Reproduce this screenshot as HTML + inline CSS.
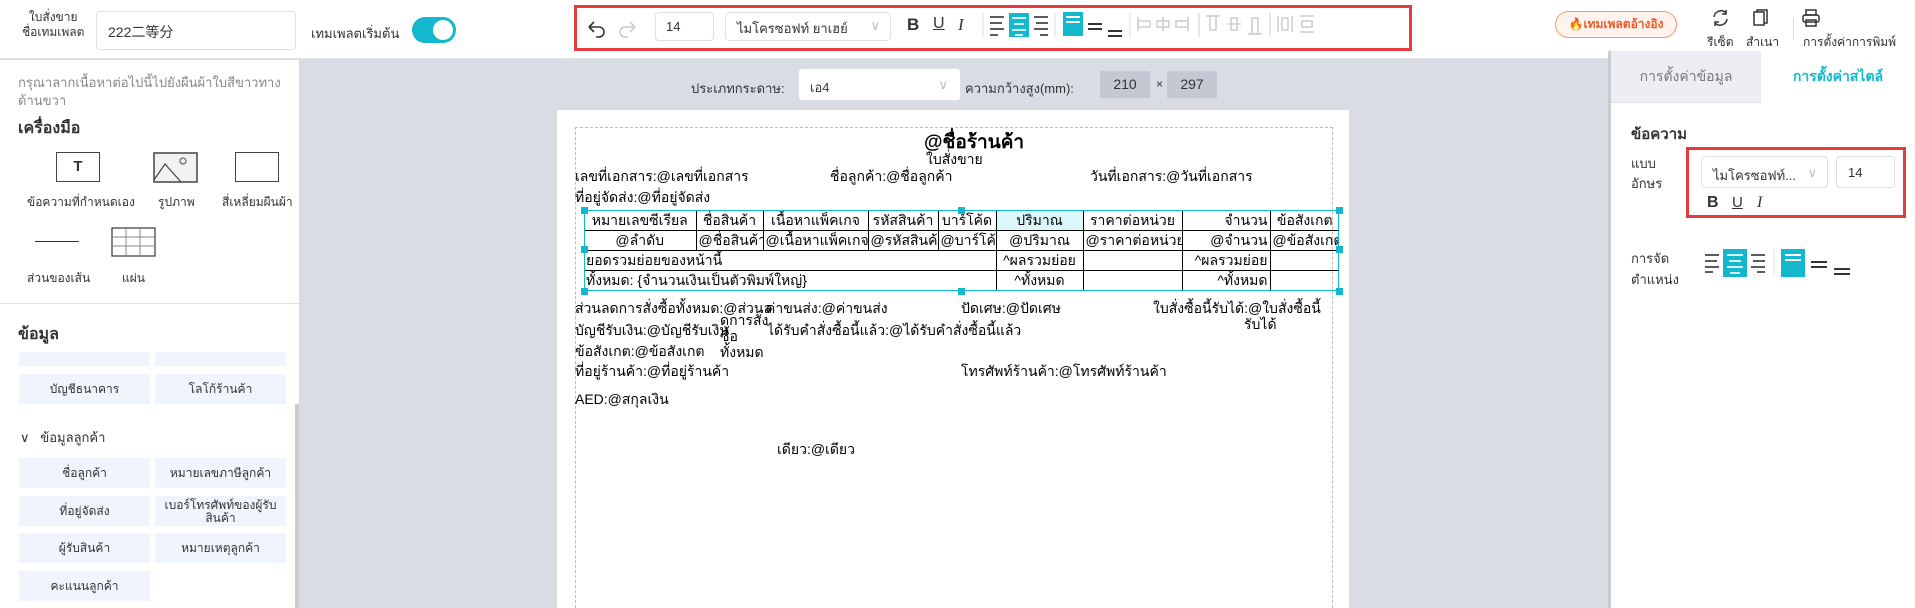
<!DOCTYPE html>
<html><head><meta charset="utf-8"><style>
*{box-sizing:border-box;margin:0;padding:0}
body{width:1915px;height:608px;overflow:hidden;background:#d9dce3;font-family:"Liberation Sans",sans-serif;color:#333;position:relative;font-size:13px}
.a{position:absolute;white-space:nowrap}
.top{position:absolute;left:0;top:0;width:1915px;height:59px;background:#fff;border-bottom:1px solid #e2e4ea}
.inp{position:absolute;border:1px solid #dcdfe6;border-radius:4px;background:#fff}
.teal{background:#14b8cd}
.left{position:absolute;left:0;top:60px;width:299px;height:548px;background:#fff}
.btn{position:absolute;width:131px;height:30px;background:#f0f4fc;text-align:center;line-height:30px;font-size:12px;color:#333}
.paper{position:absolute;left:557px;top:110px;width:792px;height:498px;background:#fff}
.pt{position:absolute;white-space:nowrap;font-size:14px;color:#000}
table{border-collapse:collapse;position:absolute;left:584px;top:210px;width:755px;font-size:14px;color:#000;table-layout:fixed}
td{border:1px solid #000;height:20px;line-height:18px;text-align:center;padding:0 2px;white-space:nowrap;overflow:hidden}
.h{position:absolute;width:7px;height:7px;background:#14b8cd}
.right{position:absolute;left:1610px;top:51px;width:305px;height:557px;background:#fff}
.ic{position:absolute}
</style></head><body>
<div class="top"></div>
<div class="a" style="left:22px;top:10px;font-size:12px;line-height:15px;text-align:center">ใบสั่งขาย<br>ชื่อเทมเพลต</div>
<div class="inp" style="left:96px;top:11px;width:200px;height:39px;padding:10px 11px;font-size:14px">222二等分</div>
<div class="a" style="left:311px;top:23px;font-size:13px">เทมเพลตเริ่มต้น</div>
<div class="a teal" style="left:412px;top:17px;width:44px;height:26px;border-radius:13px"><div style="position:absolute;right:3px;top:3px;width:20px;height:20px;border-radius:50%;background:#fff"></div></div>
<div class="a" style="left:574px;top:5px;width:838px;height:46px;border:3px solid #e8393d"></div>
<svg class="ic" style="left:585px;top:18px" width="60" height="22"><path d="M4 9h10a5 5 0 0 1 0 10h-3M4 9l5-5M4 9l5 5" stroke="#333" stroke-width="1.6" fill="none"/><path d="M50 9H40a5 5 0 0 0 0 10h3M50 9l-5-5M50 9l-5 5" stroke="#ccc" stroke-width="1.6" fill="none"/></svg>
<div class="inp" style="left:655px;top:12px;width:59px;height:29px;padding:6px 10px;font-size:13px">14</div>
<div class="inp" style="left:725px;top:12px;width:166px;height:29px;padding:5px 11px;font-size:13px">ไมโครซอฟท์ ยาเฮย์<span style="position:absolute;right:10px;color:#bbb">∨</span></div>
<div class="a" style="left:907px;top:15px;font-size:17px;font-weight:bold">B</div>
<div class="a" style="left:933px;top:15px;font-size:16px;text-decoration:underline">U</div>
<div class="a" style="left:958px;top:15px;font-size:17px;font-style:italic;font-family:'Liberation Serif'">I</div>
<svg class="ic" style="left:980px;top:10px" width="440" height="32">
<line x1="3" y1="3" x2="3" y2="27" stroke="#ddd"/>
<g stroke="#333" stroke-width="1.6"><line x1="10" y1="7" x2="24" y2="7"/><line x1="10" y1="13" x2="22" y2="13"/><line x1="10" y1="19" x2="24" y2="19"/><line x1="10" y1="25" x2="18" y2="25"/></g>
<rect x="29" y="3" width="20" height="24" fill="#14b8cd"/><g stroke="#fff" stroke-width="1.6"><line x1="32" y1="8" x2="46" y2="8"/><line x1="34" y1="14" x2="44" y2="14"/><line x1="32" y1="20" x2="46" y2="20"/><line x1="35" y1="25" x2="43" y2="25"/></g>
<g stroke="#333" stroke-width="1.6"><line x1="54" y1="7" x2="68" y2="7"/><line x1="56" y1="13" x2="68" y2="13"/><line x1="54" y1="19" x2="68" y2="19"/><line x1="60" y1="25" x2="68" y2="25"/></g>
<line x1="75" y1="3" x2="75" y2="27" stroke="#ddd"/>
<rect x="83" y="2" width="20" height="24" fill="#14b8cd"/><g stroke="#fff" stroke-width="2"><line x1="86" y1="7" x2="100" y2="7"/><line x1="86" y1="12" x2="100" y2="12"/></g>
<g stroke="#333" stroke-width="2"><line x1="108" y1="14" x2="122" y2="14"/><line x1="108" y1="19" x2="122" y2="19"/><line x1="128" y1="21" x2="142" y2="21"/><line x1="128" y1="26" x2="142" y2="26"/></g>
<line x1="150" y1="3" x2="150" y2="27" stroke="#ddd"/>
<g stroke="#ccc" stroke-width="1.5" fill="none"><line x1="158" y1="7" x2="158" y2="21"/><rect x="158" y="11" width="12" height="6"/><line x1="183" y1="7" x2="183" y2="21"/><rect x="177" y="11" width="12" height="6"/><line x1="208" y1="7" x2="208" y2="21"/><rect x="196" y="11" width="12" height="6"/>
<line x1="219" y1="3" x2="219" y2="27" stroke="#ddd"/>
<line x1="226" y1="6" x2="240" y2="6"/><rect x="230" y="6" width="6" height="14"/><line x1="247" y1="14" x2="261" y2="14"/><rect x="251" y="8" width="6" height="12"/><line x1="268" y1="24" x2="282" y2="24"/><rect x="272" y="8" width="6" height="16"/>
<line x1="290" y1="3" x2="290" y2="27" stroke="#ddd"/>
<line x1="298" y1="6" x2="298" y2="22"/><line x1="312" y1="6" x2="312" y2="22"/><rect x="302" y="8" width="6" height="12"/><line x1="320" y1="6" x2="334" y2="6"/><line x1="320" y1="22" x2="334" y2="22"/><rect x="322" y="11" width="10" height="6"/></g>
</svg>
<div class="a" style="left:1555px;top:11px;width:122px;height:27px;border:1px solid #f7936b;background:#fff3ee;border-radius:14px;color:#f05a28;font-size:12px;font-weight:bold;line-height:25px;text-align:center">🔥เทมเพลตอ้างอิง</div>
<svg class="ic" style="left:1710px;top:8px" width="120" height="20"><g stroke="#333" stroke-width="1.5" fill="none"><path d="M4 9a7 7 0 0 1 12-4M17 11a7 7 0 0 1-12 4"/><path d="M16 2v4h-4M5 18v-4h4"/><rect x="44" y="4" width="10" height="13"/><path d="M47 4V2h10v13h-3"/><rect x="96" y="2" width="10" height="5"/><rect x="93" y="7" width="16" height="7" rx="2"/><rect x="96" y="12" width="10" height="6"/></g></svg>
<div class="a" style="left:1707px;top:33px;font-size:12px">รีเซ็ต</div>
<div class="a" style="left:1746px;top:33px;font-size:12px">สำเนา</div>
<div class="a" style="left:1793px;top:18px;width:1px;height:22px;background:#ddd"></div>
<div class="a" style="left:1803px;top:33px;font-size:12px">การตั้งค่าการพิมพ์</div>

<div class="left">
<div class="a" style="left:18px;top:14px;font-size:13px;color:#888;line-height:18px;white-space:normal;width:270px">กรุณาลากเนื้อหาต่อไปนี้ไปยังผืนผ้าใบสีขาวทางด้านขวา</div>
<div class="a" style="left:18px;top:56px;font-size:16px;font-weight:bold">เครื่องมือ</div>
<div class="a" style="left:56px;top:92px;width:44px;height:30px;border:1.5px solid #444;text-align:center;font-weight:bold;font-size:15px;line-height:27px">T</div>
<svg class="ic" style="left:153px;top:92px" width="45" height="31"><rect x="1" y="1" width="43" height="29" fill="#f2f2f2" stroke="#444" stroke-width="1.5"/><path d="M1 28l11-16 16 18" stroke="#444" fill="none" stroke-width="1.2"/><circle cx="30" cy="9" r="3" fill="none" stroke="#444"/></svg>
<div class="a" style="left:235px;top:92px;width:44px;height:30px;border:1.5px solid #444"></div>
<div class="a" style="left:27px;top:133px;font-size:12px">ข้อความที่กำหนดเอง</div>
<div class="a" style="left:158px;top:133px;font-size:12px">รูปภาพ</div>
<div class="a" style="left:222px;top:133px;font-size:12px">สี่เหลี่ยมผืนผ้า</div>
<div class="a" style="left:35px;top:181px;width:44px;height:1px;background:#333"></div>
<svg class="ic" style="left:111px;top:167px" width="45" height="30"><g stroke="#888" fill="none"><rect x="1" y="1" width="43" height="28" stroke="#444" stroke-width="1.3"/><line x1="15" y1="1" x2="15" y2="29"/><line x1="29" y1="1" x2="29" y2="29"/><line x1="1" y1="10" x2="44" y2="10"/><line x1="1" y1="19" x2="44" y2="19"/></g></svg>
<div class="a" style="left:27px;top:209px;font-size:12px">ส่วนของเส้น</div>
<div class="a" style="left:122px;top:209px;font-size:12px">แผ่น</div>
<div class="a" style="left:0;top:243px;width:299px;height:1px;background:#ddd"></div>
<div class="a" style="left:18px;top:262px;font-size:16px;font-weight:bold">ข้อมูล</div>
</div>
<div class="btn" style="left:19px;top:352px;height:14px"></div><div class="btn" style="left:155px;top:352px;height:14px"></div>
<div class="btn" style="left:19px;top:374px">บัญชีธนาคาร</div><div class="btn" style="left:155px;top:374px">โลโก้ร้านค้า</div>
<div class="a" style="left:20px;top:427px;font-size:13px">∨&nbsp;&nbsp;&nbsp;ข้อมูลลูกค้า</div>
<div class="btn" style="left:19px;top:458px">ชื่อลูกค้า</div><div class="btn" style="left:155px;top:458px">หมายเลขภาษีลูกค้า</div>
<div class="btn" style="left:19px;top:496px">ที่อยู่จัดส่ง</div><div class="btn" style="left:155px;top:496px;line-height:13px;padding-top:3px">เบอร์โทรศัพท์ของผู้รับสินค้า</div>
<div class="btn" style="left:19px;top:533px">ผู้รับสินค้า</div><div class="btn" style="left:155px;top:533px">หมายเหตุลูกค้า</div>
<div class="btn" style="left:19px;top:571px">คะแนนลูกค้า</div>
<div class="a" style="left:295px;top:404px;width:4px;height:204px;background:#ccc"></div>

<div class="a" style="left:691px;top:78px;font-size:13px">ประเภทกระดาษ:</div>
<div class="inp" style="left:798px;top:68px;width:163px;height:33px;padding:8px 11px;font-size:13px">เอ4<span style="position:absolute;right:12px;color:#bbb">∨</span></div>
<div class="a" style="left:965px;top:78px;font-size:13px">ความกว้างสูง(mm):</div>
<div class="a" style="left:1100px;top:71px;width:50px;height:27px;background:#c3c8d2;text-align:center;line-height:27px;font-size:14px">210</div>
<div class="a" style="left:1156px;top:77px;font-size:12px">×</div>
<div class="a" style="left:1167px;top:71px;width:50px;height:27px;background:#c3c8d2;text-align:center;line-height:27px;font-size:14px">297</div>

<div class="paper"></div>
<div class="a" style="left:575px;top:127px;width:758px;height:481px;border:1px dashed #bbb;border-bottom:none"></div>
<div class="pt" style="left:924px;top:127px;font-size:19px;font-weight:bold">@ชื่อร้านค้า</div>
<div class="pt" style="left:926px;top:149px">ใบสั่งขาย</div>
<div class="pt" style="left:575px;top:166px">เลขที่เอกสาร:@เลขที่เอกสาร</div>
<div class="pt" style="left:830px;top:166px">ชื่อลูกค้า:@ชื่อลูกค้า</div>
<div class="pt" style="left:1090px;top:166px">วันที่เอกสาร:@วันที่เอกสาร</div>
<div class="pt" style="left:575px;top:187px">ที่อยู่จัดส่ง:@ที่อยู่จัดส่ง</div>
<table>
<colgroup><col style="width:112px"><col style="width:67px"><col style="width:105px"><col style="width:70px"><col style="width:58px"><col style="width:87px"><col style="width:99px"><col style="width:88px"><col style="width:69px"></colgroup>
<tr><td style="border-top:none;border-left:none">หมายเลขซีเรียล</td><td style="border-top:none">ชื่อสินค้า</td><td style="border-top:none">เนื้อหาแพ็คเกจ</td><td style="border-top:none">รหัสสินค้า</td><td style="border-top:none">บาร์โค้ด</td><td style="border-top:none;background:#dcf7fa">ปริมาณ</td><td style="border-top:none">ราคาต่อหน่วย</td><td style="border-top:none;text-align:right">จำนวน</td><td style="border-top:none;border-right:none">ข้อสังเกต</td></tr>
<tr><td style="border-left:none">@ลำดับ</td><td>@ชื่อสินค้า</td><td>@เนื้อหาแพ็คเกจ</td><td>@รหัสสินค้า</td><td>@บาร์โค้ด</td><td>@ปริมาณ</td><td>@ราคาต่อหน่วย</td><td style="text-align:right">@จำนวน</td><td style="border-right:none">@ข้อสังเกต</td></tr>
<tr><td colspan="5" style="text-align:left;border-left:none">ยอดรวมย่อยของหน้านี้</td><td>^ผลรวมย่อย</td><td></td><td style="text-align:right">^ผลรวมย่อย</td><td style="border-right:none"></td></tr>
<tr><td colspan="5" style="text-align:left;border-left:none;border-bottom:none">ทั้งหมด: {จำนวนเงินเป็นตัวพิมพ์ใหญ่}</td><td style="border-bottom:none">^ทั้งหมด</td><td style="border-bottom:none"></td><td style="text-align:right;border-bottom:none">^ทั้งหมด</td><td style="border:none;border-left:1px solid #000"></td></tr>
</table>
<div class="a" style="left:584px;top:210px;width:755px;height:81px;border:1.5px solid #14b8cd"></div>
<div class="h" style="left:581px;top:207px"></div><div class="h" style="left:958px;top:207px"></div><div class="h" style="left:1336px;top:207px"></div>
<div class="h" style="left:581px;top:246px"></div><div class="h" style="left:1336px;top:246px"></div>
<div class="h" style="left:581px;top:288px"></div><div class="h" style="left:958px;top:288px"></div><div class="h" style="left:1336px;top:288px"></div>
<div class="pt" style="left:575px;top:298px">ส่วนลดการสั่งซื้อทั้งหมด:@ส่วนล</div>
<div class="pt" style="left:766px;top:298px">ค่าขนส่ง:@ค่าขนส่ง</div>
<div class="pt" style="left:961px;top:298px">ปัดเศษ:@ปัดเศษ</div>
<div class="pt" style="left:1153px;top:298px">ใบสั่งซื้อนี้รับได้:@ใบสั่งซื้อนี้</div>
<div class="pt" style="left:1244px;top:314px">รับได้</div>
<div class="pt" style="left:720px;top:312px;line-height:16px">ดการสั่ง<br>ซื้อ<br>ทั้งหมด</div>
<div class="pt" style="left:575px;top:320px">บัญชีรับเงิน:@บัญชีรับเงิน</div>
<div class="pt" style="left:767px;top:320px">ได้รับคำสั่งซื้อนี้แล้ว:@ได้รับคำสั่งซื้อนี้แล้ว</div>
<div class="pt" style="left:575px;top:341px">ข้อสังเกต:@ข้อสังเกต</div>
<div class="pt" style="left:575px;top:361px">ที่อยู่ร้านค้า:@ที่อยู่ร้านค้า</div>
<div class="pt" style="left:961px;top:361px">โทรศัพท์ร้านค้า:@โทรศัพท์ร้านค้า</div>
<div class="pt" style="left:575px;top:389px">AED:@สกุลเงิน</div>
<div class="pt" style="left:777px;top:439px">เดียว:@เดียว</div>

<div class="right"></div>
<div class="a" style="left:1608px;top:51px;width:3px;height:557px;background:#c9ccd3"></div>
<div class="a" style="left:1611px;top:51px;width:150px;height:52px;background:#eceef3;border-bottom:1px solid #e0e0e0;text-align:center;line-height:50px;color:#777;font-size:14px">การตั้งค่าข้อมูล</div>
<div class="a" style="left:1761px;top:51px;width:154px;height:52px;text-align:center;line-height:50px;color:#14b8cd;font-size:14px;font-weight:bold">การตั้งค่าสไตล์</div>
<div class="a" style="left:1631px;top:122px;font-size:15px;font-weight:bold">ข้อความ</div>
<div class="a" style="left:1631px;top:154px;font-size:13px;line-height:20px">แบบ<br>อักษร</div>
<div class="a" style="left:1686px;top:147px;width:220px;height:71px;border:3px solid #e8393d"></div>
<div class="inp" style="left:1701px;top:156px;width:127px;height:32px;padding:8px 11px;font-size:13px">ไมโครซอฟท์...<span style="position:absolute;right:10px;color:#bbb">∨</span></div>
<div class="inp" style="left:1836px;top:156px;width:59px;height:32px;padding:8px 11px;font-size:13px">14</div>
<div class="a" style="left:1707px;top:194px;font-size:16px;font-weight:bold">B</div>
<div class="a" style="left:1732px;top:194px;font-size:15px;text-decoration:underline">U</div>
<div class="a" style="left:1757px;top:194px;font-size:16px;font-style:italic;font-family:'Liberation Serif'">I</div>
<div class="a" style="left:1631px;top:248px;font-size:13px;line-height:21px">การจัด<br>ตำแหน่ง</div>
<svg class="ic" style="left:1703px;top:249px" width="160" height="32">
<g stroke="#333" stroke-width="1.6"><line x1="2" y1="6" x2="16" y2="6"/><line x1="2" y1="12" x2="14" y2="12"/><line x1="2" y1="18" x2="16" y2="18"/><line x1="2" y1="23" x2="10" y2="23"/></g>
<rect x="20" y="0" width="24" height="28" fill="#14b8cd"/><g stroke="#fff" stroke-width="1.6"><line x1="24" y1="6" x2="40" y2="6"/><line x1="26" y1="12" x2="38" y2="12"/><line x1="24" y1="18" x2="40" y2="18"/><line x1="27" y1="24" x2="37" y2="24"/></g>
<g stroke="#333" stroke-width="1.6"><line x1="48" y1="6" x2="62" y2="6"/><line x1="50" y1="12" x2="62" y2="12"/><line x1="48" y1="18" x2="62" y2="18"/><line x1="54" y1="23" x2="62" y2="23"/></g>
<line x1="71" y1="0" x2="71" y2="26" stroke="#ddd"/>
<rect x="78" y="0" width="24" height="28" fill="#14b8cd"/><g stroke="#fff" stroke-width="2"><line x1="82" y1="6" x2="98" y2="6"/><line x1="82" y1="11" x2="98" y2="11"/></g>
<g stroke="#333" stroke-width="2"><line x1="108" y1="13" x2="124" y2="13"/><line x1="108" y1="18" x2="124" y2="18"/><line x1="131" y1="20" x2="147" y2="20"/><line x1="131" y1="25" x2="147" y2="25"/></g>
</svg>
</body></html>
